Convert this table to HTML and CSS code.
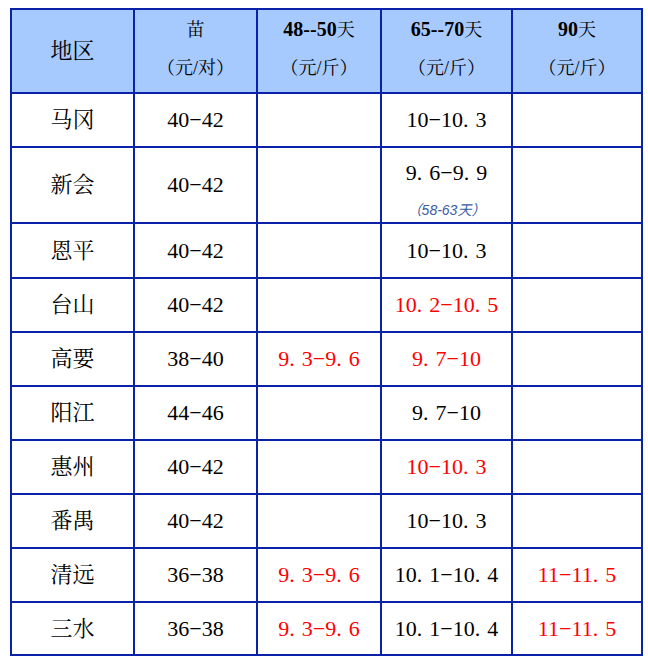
FILE: index.html
```html
<!DOCTYPE html>
<html lang="zh-CN">
<head>
<meta charset="utf-8">
<title>价格表</title>
<link rel="stylesheet" href="styles.css">
</head>
<body>
<table class="price">
  <colgroup>
    <col class="c1"><col class="c2"><col class="c3"><col class="c4"><col class="c5">
  </colgroup>
  <thead>
    <tr class="head">
      <th class="area-head">地区</th>
      <th class="two">苗<br>（元/对）</th>
      <th class="two"><span class="d">48--50</span>天<br>（元/斤）</th>
      <th class="two"><span class="d">65--70</span>天<br>（元/斤）</th>
      <th class="two"><span class="d">90</span>天<br>（元/斤）</th>
    </tr>
  </thead>
  <tbody>
    <tr class="r54"><td>马冈</td><td>40−42</td><td></td><td>10−10<span class="pt">.</span>3</td><td></td></tr>
    <tr class="r76"><td>新会</td><td>40−42</td><td></td><td><div class="main">9<span class="pt">.</span>6−9<span class="pt">.</span>9</div><div class="note">（58-63天）</div></td><td></td></tr>
    <tr class="r55"><td>恩平</td><td>40−42</td><td></td><td>10−10<span class="pt">.</span>3</td><td></td></tr>
    <tr class="r54"><td>台山</td><td>40−42</td><td></td><td class="red">10<span class="pt">.</span>2−10<span class="pt">.</span>5</td><td></td></tr>
    <tr class="r54"><td>高要</td><td>38−40</td><td class="red">9<span class="pt">.</span>3−9<span class="pt">.</span>6</td><td class="red">9<span class="pt">.</span>7−10</td><td></td></tr>
    <tr class="r54"><td>阳江</td><td>44−46</td><td></td><td>9<span class="pt">.</span>7−10</td><td></td></tr>
    <tr class="r54"><td>惠州</td><td>40−42</td><td></td><td class="red">10−10<span class="pt">.</span>3</td><td></td></tr>
    <tr class="r54"><td>番禺</td><td>40−42</td><td></td><td>10−10<span class="pt">.</span>3</td><td></td></tr>
    <tr class="r54"><td>清远</td><td>36−38</td><td class="red">9<span class="pt">.</span>3−9<span class="pt">.</span>6</td><td>10<span class="pt">.</span>1−10<span class="pt">.</span>4</td><td class="red">11−11<span class="pt">.</span>5</td></tr>
    <tr class="r53"><td>三水</td><td>36−38</td><td class="red">9<span class="pt">.</span>3−9<span class="pt">.</span>6</td><td>10<span class="pt">.</span>1−10<span class="pt">.</span>4</td><td class="red">11−11<span class="pt">.</span>5</td></tr>
  </tbody>
</table>
</body>
</html>
```
FILE: styles.css
```css
html, body {
  margin: 0;
  padding: 0;
  background: #ffffff;
}

.price {
  margin: 8px 0 0 10px;
  width: 633px;
  table-layout: fixed;
  border-collapse: separate;
  border-spacing: 0;
  border-top: 2px solid #0a22a8;
  border-left: 2px solid #0a22a8;
  font-family: "Liberation Serif", "Noto Serif CJK SC", "Noto Sans CJK SC", serif;
  color: #000000;
}

.c1 { width: 123px; }
.c2 { width: 123px; }
.c3 { width: 124px; }
.c4 { width: 131px; }
.c5 { width: 130px; }

.price th,
.price td {
  box-sizing: border-box;
  padding: 0;
  border-right: 2px solid #0a22a8;
  border-bottom: 2px solid #0a22a8;
  text-align: center;
  vertical-align: middle;
  font-size: 22px;
  font-weight: normal;
  line-height: 26px;
}

.head th {
  height: 83px;
  background: #a6c9fe;
}

.head .two {
  font-size: 18px;
  line-height: 38px;
  padding-bottom: 5px;
}

.d {
  font-family: "Liberation Serif", serif;
  font-weight: bold;
  font-size: 20px;
}

.r53 td { height: 53px; }
.r54 td { height: 54px; }
.r55 td { height: 55px; }
.r76 td { height: 76px; }

.pt {
  margin-right: 7px;
}

.red {
  color: #ff0000;
}

.main {
  line-height: 50px;
}

.note {
  font-family: "Liberation Sans", "Noto Sans CJK SC", sans-serif;
  font-style: italic;
  font-size: 14px;
  line-height: 24px;
  color: #3b5ba5;
}
```
